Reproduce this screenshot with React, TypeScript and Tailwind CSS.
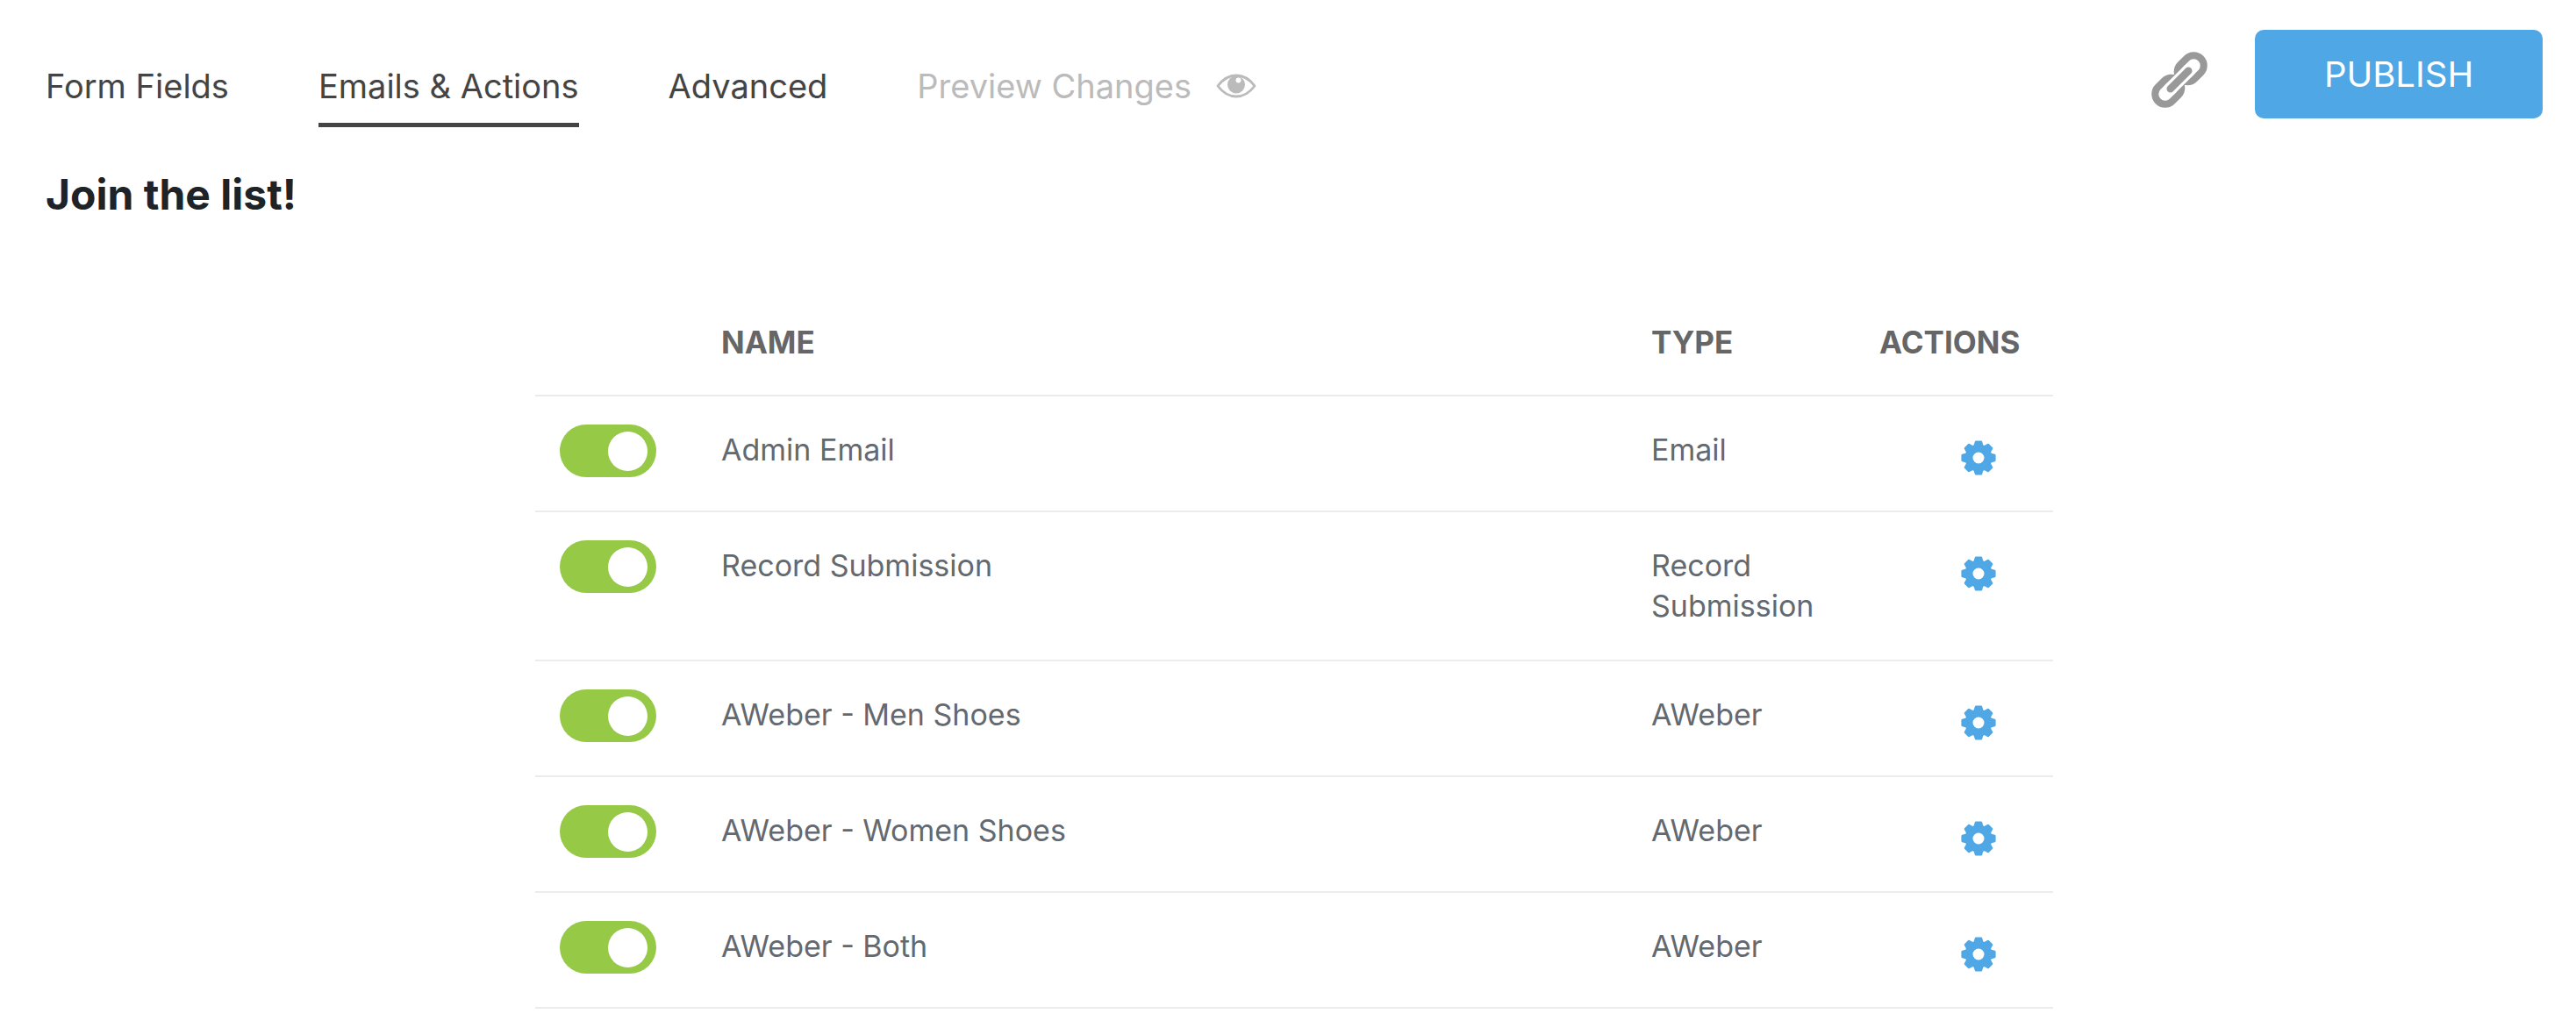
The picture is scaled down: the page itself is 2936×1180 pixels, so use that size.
import React, { useState } from "react";

interface FormAction {
  id: number;
  name: string;
  type: string;
}

const tabs = ["Form Fields", "Emails & Actions", "Advanced"];

const formActions: FormAction[] = [
  { id: 1, name: "Admin Email", type: "Email" },
  { id: 2, name: "Record Submission", type: "Record Submission" },
  { id: 3, name: "AWeber - Men Shoes", type: "AWeber" },
  { id: 4, name: "AWeber - Women Shoes", type: "AWeber" },
  { id: 5, name: "AWeber - Both", type: "AWeber" },
];

const EyeIcon = () => (
  <svg viewBox="0 0 46 28" className="h-7 w-[46px]" aria-hidden="true">
    <path
      d="M2 14C8 6 15 2 23 2s15 4 21 12c-6 8-13 12-21 12S8 22 2 14z"
      fill="none"
      stroke="currentColor"
      strokeWidth="2.8"
      strokeLinejoin="round"
    />
    <circle cx="23" cy="12.5" r="10" fill="currentColor" />
    <circle cx="25.5" cy="7.5" r="3" fill="white" />
  </svg>
);

const LinkIcon = () => (
  <svg viewBox="0 0 64 64" className="size-16" aria-hidden="true">
    <g transform="translate(32 32) rotate(-45)" fill="none">
      <rect x="-34.5" y="-11.5" width="33" height="23" rx="11.5" stroke="#999999" strokeWidth="8" />
      <rect x="1.5" y="-11.5" width="33" height="23" rx="11.5" stroke="#999999" strokeWidth="8" />
      <path d="M-16 0H16" stroke="white" strokeWidth="15" strokeLinecap="round" />
      <path d="M-14.5 0H14.5" stroke="#999999" strokeWidth="8.5" strokeLinecap="round" />
    </g>
  </svg>
);

const toothAngles = [0, 45, 90, 135, 180, 225, 270, 315];

const GearIcon = () => (
  <svg viewBox="-20 -20 40 40" className="size-10" aria-hidden="true">
    <circle r="11" fill="none" stroke="currentColor" strokeWidth="9" />
    {toothAngles.map((angle) => (
      <path
        key={angle}
        transform={`rotate(${angle})`}
        d="M-5.8 -13L-4.2 -18.6Q-4 -19.6 -3 -19.6H3Q4 -19.6 4.2 -18.6L5.8 -13z"
        fill="currentColor"
      />
    ))}
  </svg>
);

const App = () => {
  const [activeTab, setActiveTab] = useState("Emails & Actions");
  const [enabled, setEnabled] = useState<number[]>(formActions.map((a) => a.id));

  const toggleAction = (id: number) => {
    setEnabled((prev) => (prev.includes(id) ? prev.filter((x) => x !== id) : [...prev, id]));
  };

  return (
    <div className="bg-white pt-[34px] pr-[38px] pb-7 pl-[52px] font-[Inter,sans-serif]">
      <header className="flex items-start justify-between">
        <nav className="flex items-start gap-[102px] pt-10 text-[38px] leading-12 text-[#444444]">
          {tabs.map((tab) => (
            <button
              key={tab}
              type="button"
              onClick={() => setActiveTab(tab)}
              className={`cursor-pointer border-b-5 pb-[18px] ${
                activeTab === tab ? "border-[#444444]" : "border-transparent"
              }`}
            >
              {tab}
            </button>
          ))}
          <a href="#preview" className="flex items-center gap-7 text-[#bbbbbb]">
            Preview Changes
            <EyeIcon />
          </a>
        </nav>
        <div className="flex items-start gap-[54px]">
          <button type="button" aria-label="Copy link" className="mt-[25px] cursor-pointer">
            <LinkIcon />
          </button>
          <button
            type="button"
            className="h-[101px] w-[328px] cursor-pointer rounded-[10px] bg-[#4fa8e5] text-[40px] text-white"
          >
            PUBLISH
          </button>
        </div>
      </header>

      <h1 className="mt-[45px] text-[48px] leading-16 font-bold text-[#1d2327]">Join the list!</h1>

      <table className="mx-auto mt-[95px] w-full max-w-[1730px] table-fixed border-collapse text-left text-[34px] leading-[46px] text-[#646970]">
        <thead>
          <tr className="border-b-2 border-[#ebebeb] text-[35px] text-[#666666]">
            <td className="w-[212px]" />
            <th className="pt-[18px] pb-[37px] font-bold">NAME</th>
            <th className="w-[260px] pt-[18px] pb-[37px] font-bold">TYPE</th>
            <th className="w-[198px] pt-[18px] pb-[37px] font-bold">ACTIONS</th>
          </tr>
        </thead>
        <tbody>
          {formActions.map((action) => (
            <tr key={action.id} className="border-b-2 border-[#ebecee] align-top">
              <td className="pt-8 pb-[38px] pl-7">
                <label className="relative flex h-[60px] w-[110px] cursor-pointer items-center rounded-full bg-gray-300 px-[10px] has-checked:justify-end has-checked:bg-[#95c946]">
                  <input
                    type="checkbox"
                    aria-label={action.name}
                    checked={enabled.includes(action.id)}
                    onChange={() => toggleAction(action.id)}
                    className="sr-only"
                  />
                  <span className="size-[45px] rounded-full bg-white" />
                </label>
              </td>
              <td className="pt-[38px] pb-[38px]">{action.name}</td>
              <td className="pt-[38px] pr-10 pb-[38px]">{action.type}</td>
              <td className="pt-[50px] pl-[93px]">
                <button
                  type="button"
                  aria-label={`Settings for ${action.name}`}
                  className="block cursor-pointer text-[#4fa8e5]"
                >
                  <GearIcon />
                </button>
              </td>
            </tr>
          ))}
        </tbody>
      </table>
    </div>
  );
};

export default App;
